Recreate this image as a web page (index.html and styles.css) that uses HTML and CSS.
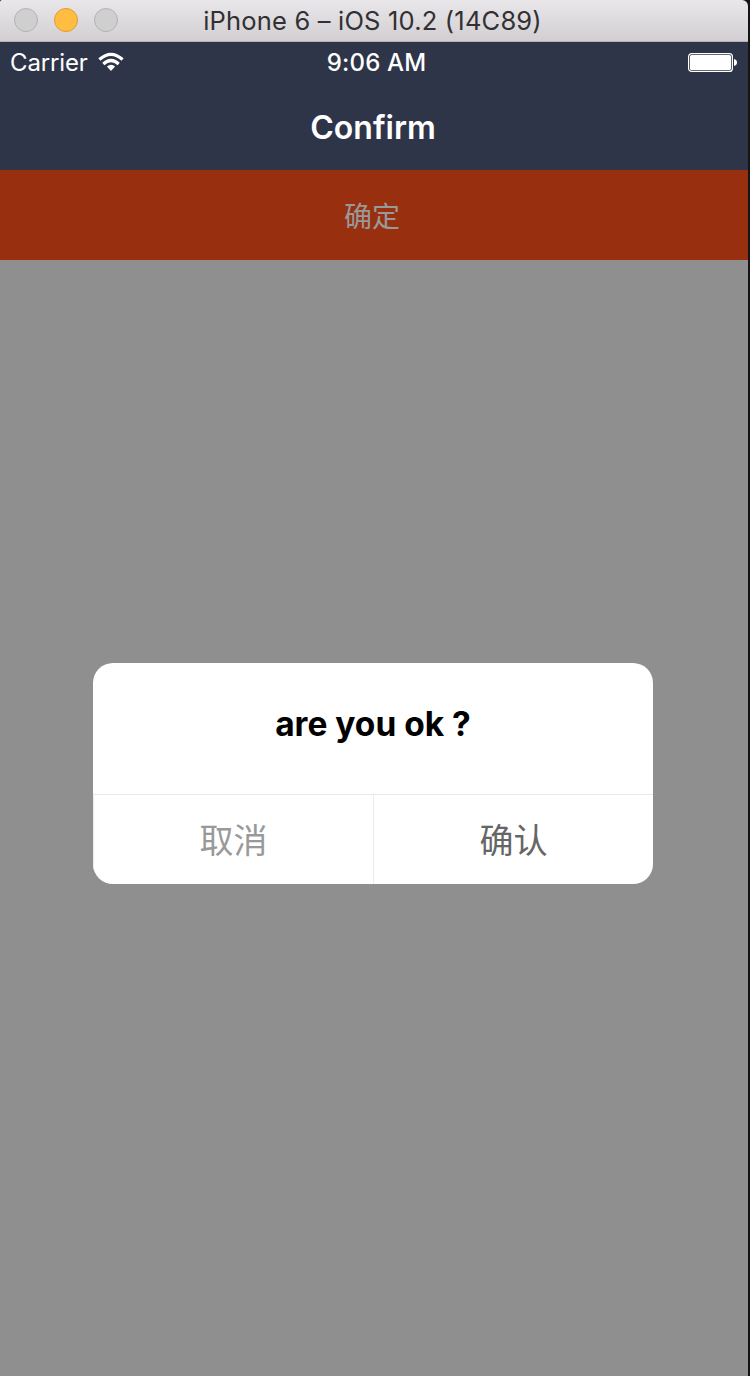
FILE: index.html
```html
<!DOCTYPE html>
<html lang="zh-CN">
<head>
<meta charset="utf-8">
<title>Confirm</title>
<link rel="stylesheet" href="styles.css">
</head>
<body>
<div class="simulator">
  <header class="titlebar">
    <div class="lights"><i class="light"></i><i class="light light-minimize"></i><i class="light"></i></div>
    <div class="window-title"><span>iPhone 6 – iOS 10.2 (14C89)</span></div>
  </header>
  <div class="statusbar">
    <div class="carrier"><span>Carrier</span>
      <svg class="wifi" width="26" height="20" viewBox="0 0 26 20"><g fill="none" stroke="#fff" stroke-width="3.2"><path d="M1.4 7.5Q13 -2.8 24.6 7.5"/><path d="M5.3 12Q13 5 20.7 12"/></g><path fill="#fff" d="M8.9 14.6Q13 11 17.1 14.6L13 19Z"/></svg>
    </div>
    <div class="clock"><span>9:06 AM</span></div>
    <svg class="battery" width="50" height="20" viewBox="0 0 50 20"><rect x=".6" y=".6" width="43.8" height="17.8" rx="3" fill="none" stroke="#fff" stroke-width="1.2"/><rect x="2" y="2" width="41" height="15" rx="1.6" fill="#fff"/><path fill="#fff" d="M46 6q3 .6 3 3.5t-3 3.5z"/></svg>
  </div>
  <nav class="navbar"><h1>Confirm</h1></nav>
  <div class="trigger"><span>确定</span></div>
  <main class="backdrop">
    <section class="dialog">
      <div class="message"><span>are you ok ?</span></div>
      <div class="actions">
        <div class="action cancel"><span>取消</span></div>
        <div class="action confirm"><span>确认</span></div>
      </div>
    </section>
  </main>
</div>
</body>
</html>
```
FILE: styles.css
```css
* { box-sizing: border-box; }
body {
  margin: 0;
  background: #141414;
  font-family: Inter, "Noto Sans CJK SC", sans-serif;
}
.simulator {
  display: flex;
  flex-direction: column;
  width: 748px;
  height: 1376px;
}
.titlebar {
  display: grid;
  grid-template-columns: 132px 1fr 135px;
  grid-template-rows: 40px;
  align-items: center;
  height: 42px;
  padding-bottom: 1px;
  border-bottom: 1px solid #b4b1b4;
  border-radius: 2px 6px 0 0;
  background: linear-gradient(#e9e7e9, #d1cfd1);
}
.lights { display: flex; gap: 16px; padding-left: 14px; }
.light {
  width: 24px;
  height: 24px;
  border: 1px solid #b3b2b3;
  border-radius: 50%;
  background: #d0cfd0;
}
.light-minimize { border-color: #e09b32; background: #ffbe41; }
.window-title {
  align-self: start;
  text-align: center;
  color: #323032;
  font-size: 25.5px;
  line-height: 42px;
  letter-spacing: 0.19px;
  white-space: nowrap;
}
.statusbar {
  display: grid;
  grid-template-columns: 1fr 110px 1fr;
  height: 40px;
  padding: 0 10px;
  color: #fff;
  background: #2f3549;
  font-size: 24px;
  line-height: 42px;
  white-space: nowrap;
}
.carrier { display: flex; gap: 10px; letter-spacing: -0.15px; }
.wifi { margin-top: 10px; }
.clock { display: flex; justify-content: center; padding-left: 5px; font-weight: 500; letter-spacing: 0.15px; }
.battery { justify-self: end; margin-top: 11px; }
.navbar {
  height: 88px;
  color: #fff;
  background: #2f3549;
  text-align: center;
}
.navbar h1 { margin: 0; padding-right: 2px; font-size: 32px; font-weight: 600; line-height: 91px; }
.trigger {
  height: 90px;
  padding-right: 4px;
  color: #999;
  background: #98300f;
  text-align: center;
  font-size: 28px;
  line-height: 95px;
}
.backdrop { flex: 1; padding: 403px 0 0 93px; background: #8f8f8f; }
.dialog {
  width: 560px;
  height: 221px;
  overflow: hidden;
  border-radius: 20px;
  background: #fff;
}
.message {
  height: 131px;
  text-align: center;
  font-size: 33.5px;
  font-weight: 650;
  line-height: 123px;
}
.actions {
  display: grid;
  grid-template-columns: 1fr 1fr;
  height: 90px;
  border-top: 1px solid #e8e8e8;
}
.action { border-left: 1px solid #ececec; text-align: center; font-size: 34px; line-height: 91px; }
.cancel { color: #999; }
.confirm { color: #666; }
```
